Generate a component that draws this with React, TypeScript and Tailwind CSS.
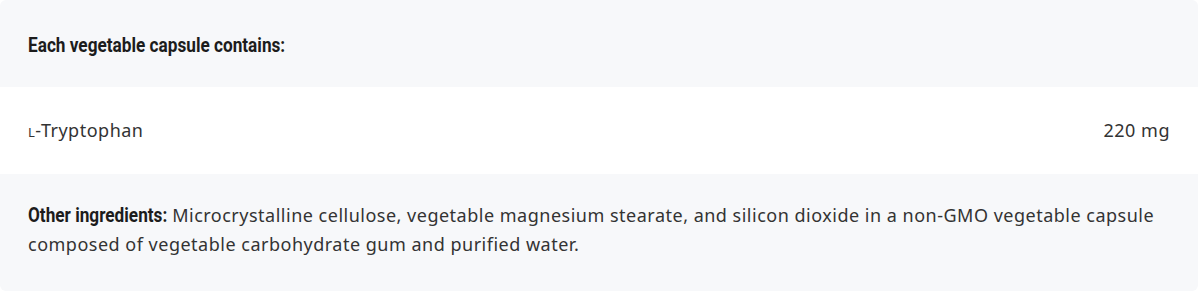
import React from 'react';

const heading = 'inline-block origin-left scale-x-[0.86] font-["Roboto",sans-serif] font-bold text-[20px] tracking-normal text-[#1c1c1c]';

export default function App() {
  return (
    <div className="w-[1200px] h-[293px] bg-white font-['Noto_Sans',sans-serif]">
      <div className="w-[1198px] h-[291px] rounded-md bg-[#f7f8fa] overflow-hidden flex flex-col text-[#333]">
        <div className="h-[87px] flex items-center px-7 pt-[3px]">
          <span className={heading}>Each vegetable capsule contains:</span>
        </div>
        <div className="h-[87px] bg-white flex items-center justify-between px-7 text-[18px] tracking-[0.5px]">
          <span>
            <span className="text-[13px]">L</span>-Tryptophan
          </span>
          <span>220 mg</span>
        </div>
        <div className="flex-1 px-7 pt-[27px] text-[18px] leading-[29px] tracking-[0.5px]">
          <span className={`${heading} mr-[-23px]`}>Other ingredients:</span>{' '}
          Microcrystalline cellulose, vegetable magnesium stearate, and silicon dioxide in a non-GMO vegetable capsule
          composed of vegetable carbohydrate gum and purified water.
        </div>
      </div>
    </div>
  );
}
